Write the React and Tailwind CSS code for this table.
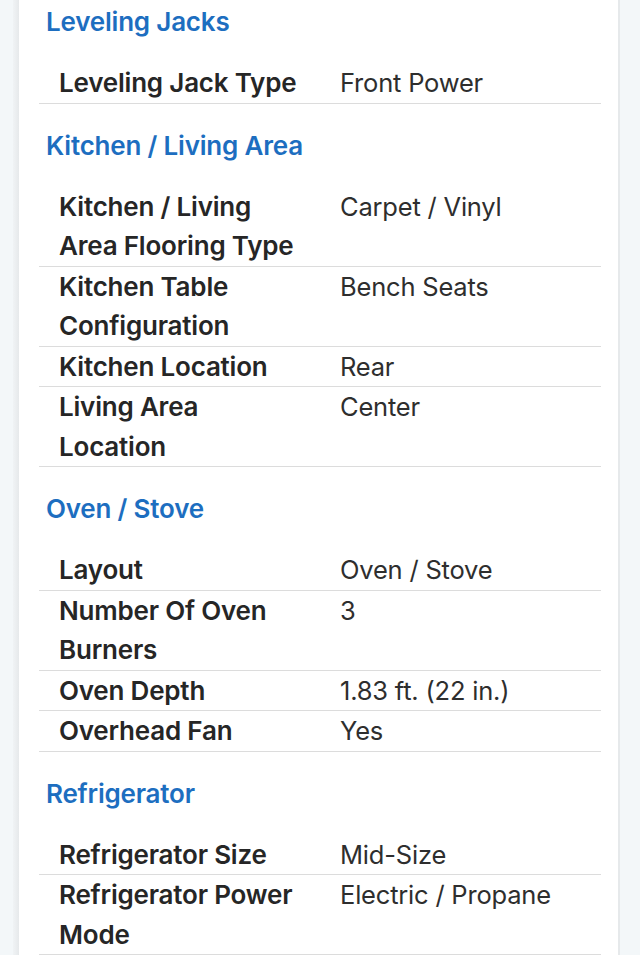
import React from "react";

const sections = [
  { title: "Leveling Jacks", rows: [["Leveling Jack Type", "Front Power"]] },
  {
    title: "Kitchen / Living Area",
    rows: [
      ["Kitchen / Living Area Flooring Type", "Carpet / Vinyl"],
      ["Kitchen Table Configuration", "Bench Seats"],
      ["Kitchen Location", "Rear"],
      ["Living Area Location", "Center"],
    ],
  },
  {
    title: "Oven / Stove",
    rows: [
      ["Layout", "Oven / Stove"],
      ["Number Of Oven Burners", "3"],
      ["Oven Depth", "1.83 ft. (22 in.)"],
      ["Overhead Fan", "Yes"],
    ],
  },
  {
    title: "Refrigerator",
    rows: [
      ["Refrigerator Size", "Mid-Size"],
      ["Refrigerator Power Mode", "Electric / Propane"],
    ],
  },
];

export default function App() {
  return (
    <div className="flex w-[640px] h-[955px] overflow-hidden bg-[#f3f7f9]" style={{ fontFamily: "Inter, 'Noto Sans', sans-serif" }}>
      <div className="w-[13px] shrink-0" />
      <div className="w-[6px] shrink-0 bg-gradient-to-r from-[#f0f3f5] to-[#e6e9eb]" />
      <div className="w-[601px] shrink-0 bg-white border-r-2 border-[#e6e9eb]">
        <div className="-mt-[20px]">
          {sections.map((s) => (
            <div key={s.title}>
              <h2 className="pl-[27px] pt-[27px] pb-[26px] text-[26px] leading-[30px] font-semibold text-[#1d6ec0] tracking-[-0.2px]">
                {s.title}
              </h2>
              <div className="ml-[20px] w-[562px]">
                {s.rows.map(([k, v]) => (
                  <div key={k} className="grid grid-cols-2 border-b border-[#dcdcdc]">
                    <div className="pl-[20px] pr-[20px] text-[26px] leading-[39.5px] font-semibold text-[#262626] tracking-[-0.2px]">
                      {k}
                    </div>
                    <div className="pl-[20px] pr-[10px] text-[25.5px] leading-[39.5px] text-[#2e2e2e] tracking-[-0.2px]">
                      {v}
                    </div>
                  </div>
                ))}
              </div>
            </div>
          ))}
        </div>
      </div>
    </div>
  );
}
